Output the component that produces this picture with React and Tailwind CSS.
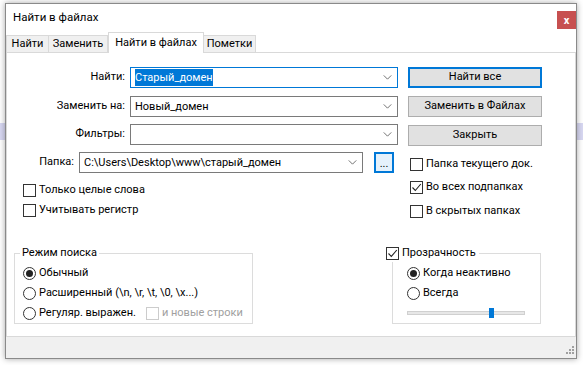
import React from "react";

const Chevron = () => (
    <svg viewBox="0 0 10 6" className="w-[9px] h-[5px]" fill="none" stroke="#555" strokeWidth="1">
        <path d="M0.5 0.5l4.5 4.5 4.5-4.5" />
    </svg>
);

const Combo = ({ width, focused, children }) => (
    <div
        className={`flex items-center h-[21px] pl-[4px] pr-[5px] bg-white border ${
            focused ? "border-[#0078d7]" : "border-[#7a7a7a]"
        } ${width}`}
    >
        <div className="flex-1 whitespace-nowrap overflow-hidden leading-[17px]">{children}</div>
        <Chevron />
    </div>
);

const Check = ({ checked, disabled }) => (
    <span
        className={`w-[13px] h-[13px] border flex items-center justify-center bg-white shrink-0 ${
            disabled ? "border-[#cccccc]" : "border-[#333333]"
        }`}
    >
        {checked && (
            <svg viewBox="0 0 11 11" className="w-[11px] h-[11px]" fill="none" stroke="#222" strokeWidth="1.1">
                <path d="M1.5 5.5l2.8 3 5.5-6.5" />
            </svg>
        )}
    </span>
);

const Radio = ({ checked }) => (
    <span className="w-[13px] h-[13px] rounded-full border border-[#333333] flex items-center justify-center bg-white shrink-0">
        {checked && <span className="w-[7px] h-[7px] rounded-full bg-[#222222]" />}
    </span>
);

const CheckRow = ({ label, checked, className = "" }) => (
    <div className={`flex items-center h-[17px] gap-[3px] ${className}`}>
        <Check checked={checked} />
        <span className="whitespace-nowrap">{label}</span>
    </div>
);

const RadioRow = ({ label, checked, children }) => (
    <div className="flex items-center h-[17px] gap-[3px] whitespace-nowrap">
        <Radio checked={checked} />
        <span>{label}</span>
        {children}
    </div>
);

const Button = ({ children, primary }) => (
    <div
        className={`h-[21px] w-[134px] flex items-center justify-center bg-[#e1e1e1] ${
            primary ? "border-2 border-[#0078d7]" : "border border-[#adadad]"
        }`}
    >
        {children}
    </div>
);

const tabs = [
    { label: "Найти", w: "w-[43px] border-l" },
    { label: "Заменить", w: "w-[59px]" },
    { label: "Найти в файлах", w: "w-[96px]", active: true },
    { label: "Пометки", w: "w-[52px]" },
];

export default function App() {
    return (
        <div
            className="relative w-[583px] h-[365px] overflow-hidden bg-white text-[11px] text-black"
            style={{ fontFamily: 'Roboto, "Noto Sans", sans-serif' }}
        >
            {/* editor line behind the dialog */}
            <div className="absolute left-0 right-0 top-[123px] h-[17px] bg-[#d8d8f2]" />

            {/* Window */}
            <div className="relative ml-[5px] mt-[3px] w-[572px] h-[356px] bg-white border border-[#8a8a8a] shadow-[0_0_6px_rgba(0,0,0,0.35)] flex flex-col">
                {/* Title bar */}
                <div className="h-[28px] flex justify-between shrink-0">
                    <div className="pl-[7px] flex items-center leading-none text-[11.5px]">Найти в файлах</div>
                    <div className="mt-[7px] w-[19px] h-[18px] bg-[#c75050] text-white font-bold text-[11px] flex items-center justify-center leading-none">
                        x
                    </div>
                </div>

                {/* Tabs */}
                <div className="h-[20px] flex items-end shrink-0">
                    {tabs.map((t) =>
                        t.active ? (
                            <div
                                key={t.label}
                                className={`relative z-10 -mb-[1px] h-[21px] ${t.w} bg-white border border-b-0 border-[#d9d9d9] flex items-center justify-center whitespace-nowrap`}
                            >
                                {t.label}
                            </div>
                        ) : (
                            <div
                                key={t.label}
                                className={`h-[17px] ${t.w} bg-[#f0f0f0] border-t border-r border-[#d9d9d9] flex items-center justify-center whitespace-nowrap`}
                            >
                                {t.label}
                            </div>
                        )
                    )}
                </div>

                {/* Panel */}
                <div className="h-[285px] border border-[#d9d9d9] flex flex-col shrink-0">
                    <div className="flex">
                        {/* Left column */}
                        <div className="w-[401px] flex flex-col">
                            <div className="mt-[14px] flex items-center">
                                <span className="w-[118px] text-right">Найти:</span>
                                <div className="ml-[5px]">
                                    <Combo width="w-[268px]" focused>
                                        <span className="bg-[#0078d7] text-white py-[2px]">Старый_домен</span>
                                    </Combo>
                                </div>
                            </div>
                            <div className="mt-[8px] flex items-center">
                                <span className="w-[118px] text-right">Заменить на:</span>
                                <div className="ml-[5px]">
                                    <Combo width="w-[268px]">Новый_домен</Combo>
                                </div>
                            </div>
                            <div className="mt-[7px] flex items-center">
                                <span className="w-[118px] text-right">Фильтры:</span>
                                <div className="ml-[5px]">
                                    <Combo width="w-[268px]" />
                                </div>
                            </div>
                            <div className="mt-[7px] flex items-center">
                                <span className="w-[67px] text-right">Папка:</span>
                                <div className="ml-[5px]">
                                    <Combo width="w-[284px]">C:\Users\Desktop\www\старый_домен</Combo>
                                </div>
                                <div className="ml-[11px] w-[20px] h-[21px] border-2 border-[#0078d7] bg-[#e5f1fb] flex items-end justify-center leading-[14px]">
                                    ...
                                </div>
                            </div>
                            <CheckRow className="mt-[9px] ml-[16px]" label="Только целые слова" />
                            <CheckRow className="mt-[3px] ml-[16px]" label="Учитывать регистр" />
                        </div>

                        {/* Right column */}
                        <div className="flex flex-col">
                            <div className="mt-[14px]">
                                <Button primary>Найти все</Button>
                            </div>
                            <div className="mt-[8px]">
                                <Button>Заменить в Файлах</Button>
                            </div>
                            <div className="mt-[8px]">
                                <Button>Закрыть</Button>
                            </div>
                            <CheckRow className="mt-[10px] ml-[2px]" label="Папка текущего док." />
                            <CheckRow className="mt-[6px] ml-[2px]" label="Во всех подпапках" checked />
                            <CheckRow className="mt-[7px] ml-[2px]" label="В скрытых папках" />
                        </div>
                    </div>

                    {/* Group boxes */}
                    <div className="mt-[33px] flex">
                        <div className="relative ml-[7px] w-[239px] h-[71px] border border-[#dcdcdc] pt-[11px] pl-[8px] flex flex-col gap-[3px]">
                            <span className="absolute -top-[9px] left-[5px] px-[2px] bg-white leading-[16px]">
                                Режим поиска
                            </span>
                            <RadioRow label="Обычный" checked />
                            <RadioRow label="Расширенный (\n, \r, \t, \0, \x...)" />
                            <RadioRow label="Регуляр. выражен.">
                                <span className="ml-[7px] flex items-center gap-[3px] text-[#a0a0a0]">
                                    <Check disabled />
                                    <span>и новые строки</span>
                                </span>
                            </RadioRow>
                        </div>

                        <div className="relative ml-[139px] w-[149px] h-[71px] border border-[#dcdcdc] pt-[11px] pl-[14px] flex flex-col gap-[3px]">
                            <div className="absolute -top-[9px] -left-[7px] pr-[3px] bg-white">
                                <CheckRow label="Прозрачность" checked />
                            </div>
                            <RadioRow label="Когда неактивно" checked />
                            <RadioRow label="Всегда" />
                            <div className="relative mt-[6px] w-[118px] h-[4px] bg-[#e7e7e7] border border-[#d0d0d0]">
                                <span className="absolute left-[81px] -top-[4px] w-[5px] h-[10px] bg-[#0078d7]" />
                            </div>
                        </div>
                    </div>
                </div>

                {/* Bottom strip */}
                <div className="flex-1 bg-[#f0f0f0] flex items-end justify-end pr-[1px] pb-[1px]">
                    <svg viewBox="0 0 12 12" className="w-[12px] h-[12px]" fill="#a0a0a0">
                        <rect x="9" y="1" width="2" height="2" />
                        <rect x="6" y="4" width="2" height="2" />
                        <rect x="9" y="4" width="2" height="2" />
                        <rect x="3" y="7" width="2" height="2" />
                        <rect x="6" y="7" width="2" height="2" />
                        <rect x="9" y="7" width="2" height="2" />
                    </svg>
                </div>
            </div>
        </div>
    );
}
